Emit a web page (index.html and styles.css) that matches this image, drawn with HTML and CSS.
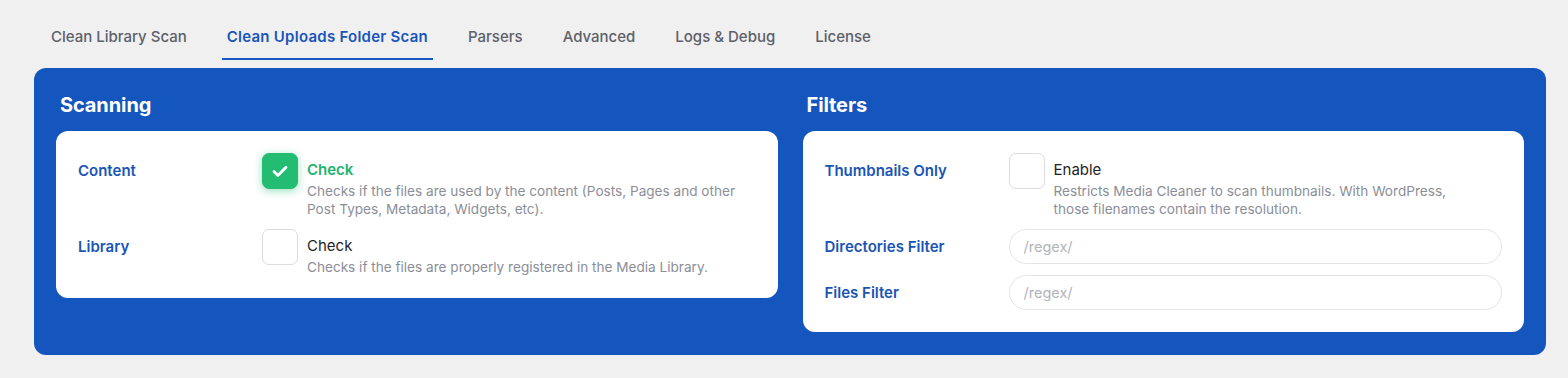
FILE: index.html
```html
<!DOCTYPE html>
<html lang="en">
<head>
<meta charset="utf-8">
<title>Media Cleaner Settings</title>
<link rel="stylesheet" href="styles.css">
</head>
<body>
  <nav class="tabs">
    <div class="tab">Clean Library Scan</div>
    <div class="tab active">Clean Uploads Folder Scan</div>
    <div class="tab">Parsers</div>
    <div class="tab">Advanced</div>
    <div class="tab">Logs &amp; Debug</div>
    <div class="tab">License</div>
  </nav>

  <main class="panel">
    <section class="column">
      <h2 class="title">Scanning</h2>
      <div class="card">
        <div class="row">
          <div class="label">Content</div>
          <div class="option">
            <span class="box checked">
              <svg viewBox="0 0 24 24" width="24" height="24"><path d="M6 12.6l3.9 3.9L18 8.2" fill="none" stroke="#fff" stroke-width="2.8" stroke-linecap="round" stroke-linejoin="round"/></svg>
            </span>
            <div class="text">
              <div class="opt-title on">Check</div>
              <div class="desc">Checks if the files are used by the content (Posts, Pages and other<br>Post Types, Metadata, Widgets, etc).</div>
            </div>
          </div>
        </div>
        <div class="row">
          <div class="label">Library</div>
          <div class="option">
            <span class="box"></span>
            <div class="text">
              <div class="opt-title">Check</div>
              <div class="desc">Checks if the files are properly registered in the Media Library.</div>
            </div>
          </div>
        </div>
      </div>
    </section>

    <section class="column">
      <h2 class="title">Filters</h2>
      <div class="card">
        <div class="row">
          <div class="label">Thumbnails Only</div>
          <div class="option">
            <span class="box"></span>
            <div class="text">
              <div class="opt-title">Enable</div>
              <div class="desc">Restricts Media Cleaner to scan thumbnails. With WordPress,<br>those filenames contain the resolution.</div>
            </div>
          </div>
        </div>
        <div class="row center">
          <div class="label">Directories Filter</div>
          <input class="field" type="text" placeholder="/regex/">
        </div>
        <div class="row center">
          <div class="label">Files Filter</div>
          <input class="field" type="text" placeholder="/regex/">
        </div>
      </div>
    </section>
  </main>
</body>
</html>
```

FILE: styles.css
```css
* { box-sizing: border-box; }

body {
  margin: 0;
  background: #f0f0f1;
  font-family: Inter, "Noto Sans", "Liberation Sans", sans-serif;
  -webkit-font-smoothing: antialiased;
}

.tabs {
  display: flex;
  gap: 30px;
  padding-left: 46px;
}

.tab {
  padding: 26px 5px 10px;
  line-height: 22px;
  font-size: 15px;
  font-weight: 500;
  color: #5d6068;
  border-bottom: 2px solid transparent;
}

.tab.active {
  color: #1a55b8;
  font-weight: 600;
  letter-spacing: 0.25px;
  border-bottom-color: #1a57c2;
}

.panel {
  margin: 8px 22px 0 34px;
  background: #1556be;
  border-radius: 12px;
  padding: 22px 22px 23px;
  display: grid;
  grid-template-columns: 1fr 1fr;
  column-gap: 25px;
  align-items: start;
}

.title {
  margin: 0 0 11px 4px;
  color: #fff;
  font-size: 20px;
  font-weight: 700;
  line-height: 30px;
  letter-spacing: -0.1px;
}

.card {
  background: #fff;
  border-radius: 12px;
  padding: 22px 22px 22px;
  display: flex;
  flex-direction: column;
  gap: 11px;
}

.row {
  display: grid;
  grid-template-columns: 184px 1fr;
  align-items: start;
}

.row.center { align-items: center; }

.label {
  font-size: 15px;
  font-weight: 600;
  color: #1a55b5;
  line-height: 20px;
  padding-top: 8px;
}

.row.center .label { padding-top: 1px; }

.option {
  display: flex;
  gap: 9px;
  align-items: flex-start;
}

.box {
  flex: none;
  width: 36px;
  height: 36px;
  border-radius: 7px;
  border: 1.5px solid #dcdce2;
  background: #fff;
  display: flex;
  align-items: center;
  justify-content: center;
}

.box.checked {
  background: #22bd73;
  border-color: #22bd73;
  box-shadow: 0 2px 8px rgba(34, 189, 115, 0.45);
}

.text { padding-top: 6px; }

.opt-title {
  font-size: 15px;
  line-height: 22px;
  color: #1f1f24;
}

.opt-title.on {
  color: #22b36e;
  font-weight: 600;
}

.desc {
  margin-top: 1px;
  font-size: 13.6px;
  line-height: 18px;
  color: #8b8e98;
}

.field {
  width: 100%;
  height: 35px;
  border: 1.5px solid #e4e4e8;
  border-radius: 18px;
  padding: 0 14px;
  font-family: inherit;
  font-size: 14.5px;
  color: #333;
  background: #fff;
  outline: none;
}

.field::placeholder { color: #b3b4ba; }
```
